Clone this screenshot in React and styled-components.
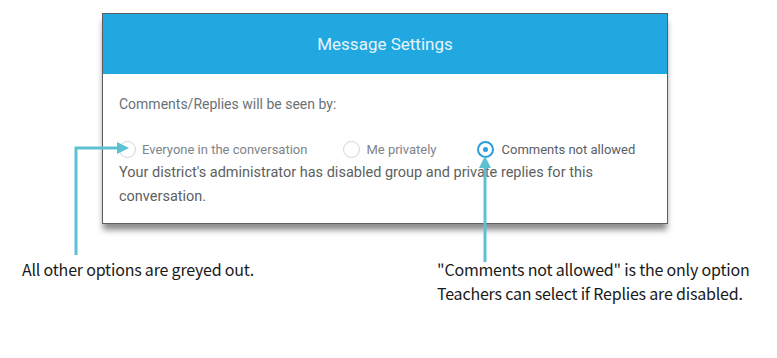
import React from "react";
import styled, { createGlobalStyle } from "styled-components";

const Global = createGlobalStyle`
  html, body { margin: 0; padding: 0; background: #ffffff; }
  body { width: 777px; height: 358px; overflow: hidden; }
`;

const Page = styled.div`
  position: relative;
  width: 777px;
  height: 358px;
  padding-top: 13px;
  box-sizing: border-box;
  display: flex;
  flex-direction: column;
`;

const Card = styled.div`
  margin-left: 102px;
  width: 566px;
  box-sizing: border-box;
  border: 1px solid #5b5f62;
  background: #fff;
  box-shadow: 0 7px 6px -1px rgba(0, 0, 0, 0.45);
`;

const Header = styled.div`
  height: 60px;
  background: #22a8e0;
  display: flex;
  align-items: center;
  justify-content: center;
  font-family: Roboto, "Liberation Sans", sans-serif;
  font-weight: 400;
  font-size: 17px;
  color: #e4f5fc;
`;

const Body = styled.div`
  padding: 20px 16px 14px 16px;
  font-family: Roboto, "Liberation Sans", sans-serif;
`;

const Prompt = styled.div`
  font-size: 14px;
  line-height: 20px;
  color: #6b7277;
`;

const RadioRow = styled.div`
  margin-top: 25px;
  display: flex;
  align-items: center;
  height: 20px;
`;

const Option = styled.label`
  display: flex;
  align-items: center;
  gap: ${(p) => (p.$active ? 8 : 6)}px;
  margin-right: ${(p) => p.$gap}px;
  font-size: 13px;
  color: ${(p) => (p.$active ? "#5a6066" : "#7d8489")};
`;

const Circle = styled.span`
  width: 17px;
  height: 17px;
  box-sizing: border-box;
  border-radius: 50%;
  border: ${(p) => (p.$checked ? "2.5px solid #2a9ed8" : "1.5px solid #d2d4d6")};
  background: #fff;
  display: flex;
  align-items: center;
  justify-content: center;
  &::after {
    content: "";
    display: ${(p) => (p.$checked ? "block" : "none")};
    width: 5px;
    height: 5px;
    border-radius: 50%;
    background: #2a9ed8;
  }
`;

const Note = styled.div`
  margin-top: 2px;
  font-size: 14.5px;
  line-height: 24px;
  color: #5d5f61;
`;

const Captions = styled.div`
  margin-top: 33px;
  display: flex;
  font-family: "Noto Sans CJK KR", "Noto Sans", sans-serif;
  font-size: 16px;
  line-height: 24px;
  color: #1a1a1a;
`;

const Caption = styled.div`
  margin-left: ${(p) => p.$left}px;
  width: ${(p) => p.$width}px;
  letter-spacing: -0.2px;
  white-space: nowrap;
`;

const Arrows = styled.svg`
  position: absolute;
  left: 0;
  top: 0;
  pointer-events: none;
`;

export default function App() {
  const c = "#5cc1d3";
  return (
    <Page>
      <Global />
      <Card>
        <Header>Message Settings</Header>
        <Body>
          <Prompt>Comments/Replies will be seen by:</Prompt>
          <RadioRow>
            <Option $gap={36}>
              <Circle />
              Everyone in the conversation
            </Option>
            <Option $gap={40}>
              <Circle />
              Me privately
            </Option>
            <Option $active>
              <Circle $checked />
              Comments not allowed
            </Option>
          </RadioRow>
          <Note>
            Your district's administrator has disabled group and private replies for this
            <br />
            conversation.
          </Note>
        </Body>
      </Card>
      <Captions>
        <Caption $left={22} $width={415}>All other options are greyed out.</Caption>
        <Caption $left={0} $width={330}>
          "Comments not allowed" is the only option
          <br />
          Teachers can select if Replies are disabled.
        </Caption>
      </Captions>
      <Arrows width="777" height="358" viewBox="0 0 777 358">
        <path d="M76 255 V148 H119" fill="none" stroke={c} strokeWidth="3" />
        <polygon points="129,148 117,142 117,154" fill={c} />
        <path d="M485 262 V166" fill="none" stroke={c} strokeWidth="3" />
        <polygon points="485,156 479,168 491,168" fill={c} />
      </Arrows>
    </Page>
  );
}
